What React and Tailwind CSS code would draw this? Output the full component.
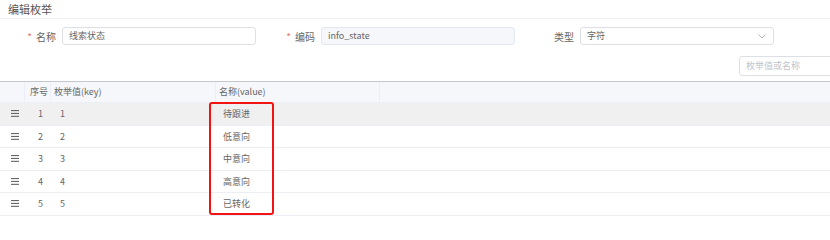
import React from 'react';

const rows = [
  { no: 1, key: '1', name: '待跟进' },
  { no: 2, key: '2', name: '低意向' },
  { no: 3, key: '3', name: '中意向' },
  { no: 4, key: '4', name: '高意向' },
  { no: 5, key: '5', name: '已转化' },
];

function Field({ label, required, children }) {
  return (
    <div className="flex w-[259px] items-center">
      <div className="w-[62px] pr-[6px] flex justify-end items-center text-[10px] text-[#666]">
        {required && <span className="text-[#f56c6c] mr-[4px]">*</span>}
        {label}
      </div>
      {children}
    </div>
  );
}

function Grip() {
  return (
    <svg width="8" height="7" viewBox="0 0 8 7">
      <rect x="0" y="0" width="8" height="1.1" fill="#666" />
      <rect x="0" y="2.9" width="8" height="1.1" fill="#666" />
      <rect x="0" y="5.8" width="8" height="1.1" fill="#666" />
    </svg>
  );
}

export default function App() {
  return (
    <div
      className="relative w-[830px] h-[235px] bg-white overflow-hidden"
      style={{ fontFamily: '"Noto Sans CJK SC", "Noto Sans", sans-serif' }}
    >
      {/* titolo */}
      <div className="h-[19px] px-[8px] flex items-center border-b border-[#f0f0f0] text-[11px] text-[#555]">
        编辑枚举
      </div>

      {/* form */}
      <div className="mt-[8px] flex h-[18px]">
        <Field label="名称" required>
          <div className="w-[194px] h-[18px] border border-[#dcdfe6] rounded-[3px] px-[6px] flex items-center text-[9px] text-[#666]">
            线索状态
          </div>
        </Field>
        <Field label="编码" required>
          <div className="w-[194px] h-[18px] border border-[#e4e7ed] bg-[#f5f7fa] rounded-[3px] px-[6px] flex items-center text-[9px] text-[#666]">
            info_state
          </div>
        </Field>
        <Field label="类型">
          <div className="w-[194px] h-[18px] border border-[#dcdfe6] rounded-[3px] px-[6px] flex items-center justify-between text-[9px] text-[#666]">
            <span>字符</span>
            <svg width="8" height="5" viewBox="0 0 8 5" className="mr-[1px]">
              <path d="M0.5 0.5 L4 4 L7.5 0.5" fill="none" stroke="#a8abb2" strokeWidth="0.9" />
            </svg>
          </div>
        </Field>
      </div>

      {/* ricerca */}
      <div className="mt-[11px] pl-[739px] flex">
        <div className="w-[110px] shrink-0 h-[20px] border border-[#dcdfe6] rounded-[3px] px-[6px] flex items-center text-[9px] text-[#c0c4cc]">
          枚举值或名称
        </div>
      </div>

      {/* tabella */}
      <div className="mt-[5px] border-t border-[#c4c7cc]">
        <div className="flex h-[21px] bg-[#f5f7fa] text-[9px] text-[#666] border-b border-[#ebeef5]">
          <div className="w-[25px] border-r border-[#ebeef5]" />
          <div className="w-[26px] border-r border-[#ebeef5] flex items-center pl-[5px]">序号</div>
          <div className="w-[165px] border-r border-[#ebeef5] flex items-center pl-[3px]">枚举值(key)</div>
          <div className="w-[164px] border-r border-[#ebeef5] flex items-center pl-[3px]">名称(value)</div>
          <div className="flex-1" />
        </div>
        {rows.map((r, i) => (
          <div
            key={r.no}
            className={`flex h-[22.5px] border-b border-[#ebeef5] text-[9px] text-[#666] ${i === 0 ? 'bg-[#f0f0f0]' : 'bg-white'}`}
          >
            <div className="w-[25px] flex items-center pl-[11px]">
              <Grip />
            </div>
            <div className="w-[26px] flex items-center pl-[13px]">{r.no}</div>
            <div className="w-[165px] flex items-center pl-[9px]">{r.key}</div>
            <div className="w-[164px] flex items-center pl-[7px]">{r.name}</div>
            <div className="flex-1" />
          </div>
        ))}
      </div>

      {/* evidenziazione */}
      <div className="absolute left-[209px] top-[102px] w-[65px] h-[113px] border-[2.5px] border-[#f01414] rounded-[3px]" />
    </div>
  );
}
